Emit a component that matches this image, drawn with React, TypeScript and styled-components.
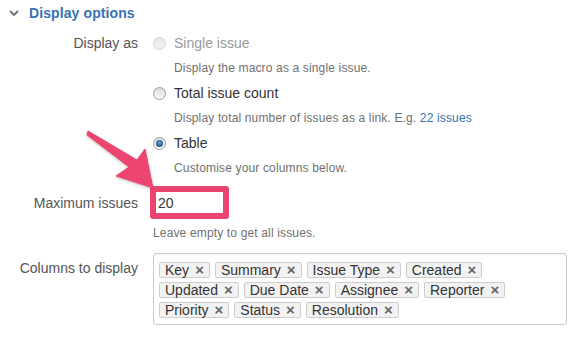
import React from "react";
import styled, { createGlobalStyle } from "styled-components";

const GlobalStyle = createGlobalStyle`
  body {
    margin: 0;
    background: #ffffff;
    font-family: "Liberation Sans", Arial, sans-serif;
  }
`;

const Page = styled.div`
  position: relative;
  width: 582px;
  height: 338px;
  overflow: hidden;
  background: #ffffff;
`;

const Header = styled.div`
  display: flex;
  align-items: center;
  gap: 10px;
  height: 26px;
  padding-left: 9px;
`;

const Heading = styled.h3`
  margin: 0;
  font-size: 14px;
  font-weight: bold;
  color: #3572b0;
  letter-spacing: 0.1px;
`;

const Form = styled.div`
  display: flex;
  flex-direction: column;
  padding-top: 7px;
`;

const FieldRow = styled.div`
  display: grid;
  grid-template-columns: 138px 414px;
  column-gap: 15px;
  margin-top: ${({ $top }: { $top?: number }) => $top ?? 0}px;
`;

const Label = styled.label`
  text-align: right;
  font-size: 14px;
  line-height: 20px;
  color: #555555;
  padding-top: ${({ $pad }: { $pad?: number }) => $pad ?? 0}px;
`;

const Options = styled.div`
  display: flex;
  flex-direction: column;
`;

const Option = styled.div`
  display: flex;
  flex-direction: column;
  padding-bottom: 5px;

  &:last-child {
    padding-bottom: 0;
  }
`;

const RadioLine = styled.div`
  display: flex;
  align-items: center;
  gap: 8px;
  height: 20px;
`;

const Radio = styled.span<{ $checked?: boolean; $disabled?: boolean }>`
  position: relative;
  width: 13px;
  height: 13px;
  box-sizing: border-box;
  border-radius: 50%;
  border: 1px solid ${({ $disabled }) => ($disabled ? "#d4d4d4" : "#9a9a9a")};
  background: ${({ $disabled }) =>
    $disabled
      ? "linear-gradient(#e6e6e6, #f4f4f4)"
      : "linear-gradient(#dcdcdc, #fafafa)"};

  &::after {
    content: "";
    display: ${({ $checked }) => ($checked ? "block" : "none")};
    position: absolute;
    left: 2px;
    top: 2px;
    width: 7px;
    height: 7px;
    border-radius: 50%;
    background: radial-gradient(circle at 50% 40%, #6fa8dc, #1f4f85 70%);
  }
`;

const RadioText = styled.span<{ $disabled?: boolean }>`
  font-size: 14px;
  color: ${({ $disabled }) => ($disabled ? "#999999" : "#333333")};
`;

const Description = styled.div<{ $indent?: boolean }>`
  margin-top: ${({ $indent }) => ($indent ? 5 : 4)}px;
  padding-left: ${({ $indent }) => ($indent ? 21 : 0)}px;
  font-size: 12px;
  line-height: 20px;
  letter-spacing: 0.15px;
  color: #707070;
`;

const Link = styled.a`
  color: #3572b0;
  text-decoration: none;
`;

const Highlight = styled.div`
  width: fit-content;
  margin-left: -3px;
  border: 6px solid #eb456f;
  border-radius: 3px;
`;

const NumberInput = styled.input`
  display: block;
  width: 67px;
  height: 21px;
  box-sizing: border-box;
  border: none;
  outline: none;
  padding: 0 0 0 2px;
  font-family: "Liberation Sans", Arial, sans-serif;
  font-size: 14px;
  color: #333333;
  background: #ffffff;
`;

const ChipBox = styled.div`
  display: flex;
  flex-wrap: wrap;
  gap: 4px 5px;
  width: 414px;
  box-sizing: border-box;
  padding: 8px 36px 6px 5px;
  border: 1px solid #cccccc;
  border-radius: 3px;
  box-shadow: inset 0 1px 2px rgba(0, 0, 0, 0.06);
`;

const Chip = styled.span`
  display: inline-flex;
  align-items: center;
  gap: 6px;
  height: 16px;
  box-sizing: border-box;
  padding: 0 5px;
  border: 1px solid #cccccc;
  border-radius: 2px;
  background: #f2f2f2;
  font-size: 14px;
  line-height: 14px;
  color: #333333;
`;

const ChipClose = styled.span`
  font-size: 15px;
  font-weight: bold;
  line-height: 14px;
  color: #666666;
`;

const Overlay = styled.svg`
  position: absolute;
  left: 0;
  top: 0;
  pointer-events: none;
`;

const columns = [
  "Key",
  "Summary",
  "Issue Type",
  "Created",
  "Updated",
  "Due Date",
  "Assignee",
  "Reporter",
  "Priority",
  "Status",
  "Resolution",
];

const Chevron = () => (
  <svg width="10" height="6" viewBox="0 0 10 6">
    <path d="M1 1 L5 5 L9 1" fill="none" stroke="#707070" strokeWidth="1.8" />
  </svg>
);

const App = () => {
  return (
    <Page>
      <GlobalStyle />
      <Header>
        <Chevron />
        <Heading>Display options</Heading>
      </Header>
      <Form>
        <FieldRow>
          <Label>Display as</Label>
          <Options>
            <Option>
              <RadioLine>
                <Radio $disabled />
                <RadioText $disabled>Single issue</RadioText>
              </RadioLine>
              <Description $indent>Display the macro as a single issue.</Description>
            </Option>
            <Option>
              <RadioLine>
                <Radio />
                <RadioText>Total issue count</RadioText>
              </RadioLine>
              <Description $indent>
                Display total number of issues as a link. E.g.{" "}
                <Link href="#">22 issues</Link>
              </Description>
            </Option>
            <Option>
              <RadioLine>
                <Radio $checked />
                <RadioText>Table</RadioText>
              </RadioLine>
              <Description $indent>Customise your columns below.</Description>
            </Option>
          </Options>
        </FieldRow>
        <FieldRow $top={8}>
          <Label $pad={7}>Maximum issues</Label>
          <div>
            <Highlight>
              <NumberInput defaultValue="20" />
            </Highlight>
            <Description>Leave empty to get all issues.</Description>
          </div>
        </FieldRow>
        <FieldRow $top={10}>
          <Label $pad={5}>Columns to display</Label>
          <ChipBox>
            {columns.map((name) => (
              <Chip key={name}>
                {name}
                <ChipClose>×</ChipClose>
              </Chip>
            ))}
          </ChipBox>
        </FieldRow>
      </Form>
      <Overlay width="582" height="338" viewBox="0 0 582 338">
        <defs>
          <filter id="arrowShadow" x="-20%" y="-20%" width="140%" height="140%">
            <feDropShadow dx="0" dy="1" stdDeviation="1.5" floodColor="#000" floodOpacity="0.25" />
          </filter>
        </defs>
        <polygon
          points="88,131 137,160 145,149 153,188 116,176 129,167 87,135"
          fill="#eb456f"
          strokeLinejoin="round"
          stroke="#eb456f"
          strokeWidth="1"
          filter="url(#arrowShadow)"
        />
      </Overlay>
    </Page>
  );
};

export default App;
